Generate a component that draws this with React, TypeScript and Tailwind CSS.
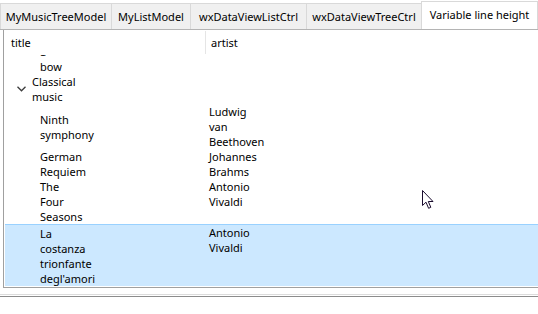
import React from "react";

type Row = {
  title: string[];
  artist: string[];
  h: string;
  parent?: boolean;
  selected?: boolean;
};

// list is scrolled: the first row ("Take a bow") is partly under the header
const rows: Row[] = [
  { title: ["a", "bow"], artist: [], h: "h-[30px]" },
  { title: ["Classical", "music"], artist: [], h: "h-[30px]", parent: true },
  { title: ["Ninth", "symphony"], artist: ["Ludwig", "van", "Beethoven"], h: "h-[45px]" },
  { title: ["German", "Requiem"], artist: ["Johannes", "Brahms"], h: "h-[30px]" },
  { title: ["The", "Four", "Seasons"], artist: ["Antonio", "Vivaldi"], h: "h-[45px]" },
  {
    title: ["La", "costanza", "trionfante", "degl'amori"],
    artist: ["Antonio", "Vivaldi"],
    h: "h-[62px]",
    selected: true,
  },
];

const tabs = [
  { label: "MyMusicTreeModel", w: "w-[111px]" },
  { label: "MyListModel", w: "w-[79px]" },
  { label: "wxDataViewListCtrl", w: "w-[116px]" },
  { label: "wxDataViewTreeCtrl", w: "w-[115px]" },
];

const Chevron = () => (
  <svg width="9" height="6" viewBox="0 0 9 6" className="shrink-0">
    <path d="M0.5 0.8 L4.5 4.8 L8.5 0.8" fill="none" stroke="#3c3c3c" strokeWidth="1.3" />
  </svg>
);

const Cursor = () => (
  <svg width="13" height="20" viewBox="0 0 13 20" className="absolute left-[422px] top-[190px]">
    <path
      d="M0.5 0.5 L0.5 15.5 L4 12.2 L6.6 18.3 L8.8 17.3 L6.3 11.5 L11 11.5 Z"
      fill="#fff"
      stroke="#1a0c2e"
      strokeWidth="1"
    />
  </svg>
);

const App = () => {
  return (
    <div className="relative w-[538px] h-[314px] overflow-hidden bg-white text-[11px] leading-[15px] text-black font-['Noto_Sans',sans-serif]">
      {/* notebook tabs */}
      <div className="flex items-end h-[29px]">
        {tabs.map((t) => (
          <div
            key={t.label}
            className={`${t.w} h-[26px] flex items-center justify-center bg-[#f0f0f0] border-l border-t border-[#d9d9d9]`}
          >
            {t.label}
          </div>
        ))}
        <div className="w-[117px] h-[28px] flex items-center justify-center bg-white border-l border-t border-r border-[#d9d9d9] pb-[3px]">
          Variable line height
        </div>
      </div>
      <div className="h-px bg-[#b4b4b4]" />

      {/* data view */}
      <div className="ml-[3px] h-[258px] border-l border-b border-[#a0a0a0] pl-px flex flex-col">
        <div className="flex h-[25px] shrink-0 items-center">
          <div className="w-[200px] pl-[6px]">title</div>
          <div className="w-px h-[23px] bg-[#e5e5e5]" />
          <div className="pl-[5px]">artist</div>
        </div>
        <div className="flex-1 overflow-hidden">
          <div className="-mt-[11px]">
            {rows.map((r, i) => (
              <div
                key={i}
                className={`flex ${r.h} ${r.selected ? "bg-[#cce8ff] border-t border-[#99d1ff]" : ""}`}
              >
                <div className={`w-[200px] flex items-center ${r.parent ? "pl-[12px]" : "pl-[35px]"}`}>
                  {r.parent && (
                    <div className="w-[15px] flex items-center">
                      <Chevron />
                    </div>
                  )}
                  <div>
                    {r.title.map((l) => (
                      <div key={l}>{l}</div>
                    ))}
                  </div>
                </div>
                <div className="pl-[4px]">
                  {r.artist.map((l) => (
                    <div key={l}>{l}</div>
                  ))}
                </div>
              </div>
            ))}
          </div>
        </div>
      </div>

      {/* panel below */}
      <div className="mt-[6px] h-px bg-[#dcdcdc]" />
      <div className="mt-px h-px bg-[#8c8c8c]" />

      <Cursor />
    </div>
  );
};

export default App;
